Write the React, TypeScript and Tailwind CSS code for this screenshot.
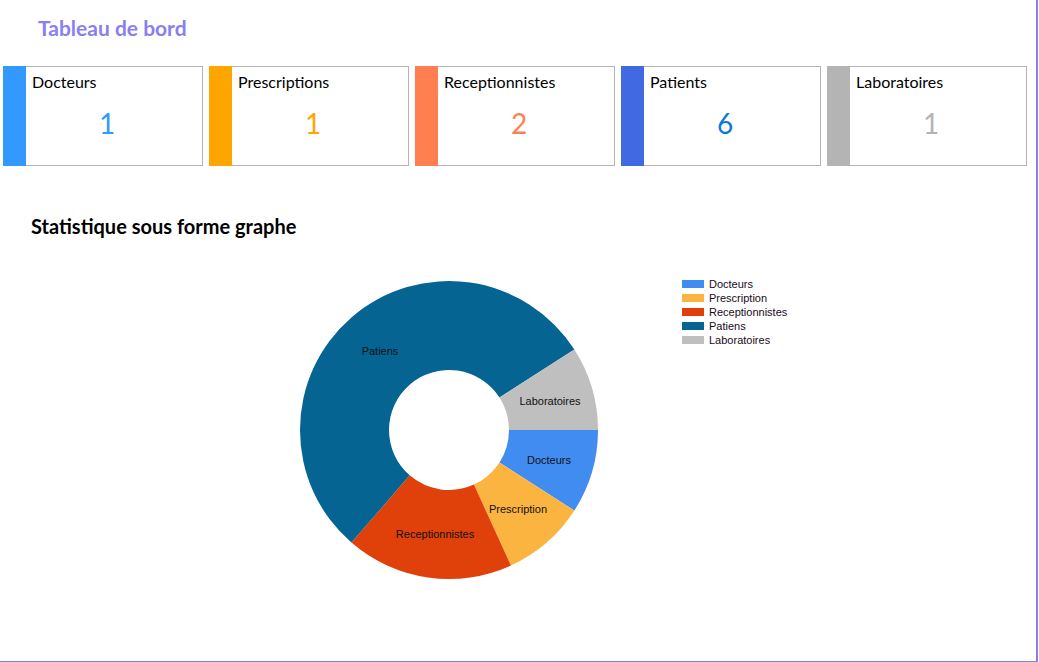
import React from 'react'

const cards = [
  { label: 'Docteurs', value: 1, bar: 'bg-[#3399ff]', text: 'text-[#3399ff]' },
  { label: 'Prescriptions', value: 1, bar: 'bg-[#ffa500]', text: 'text-[#ffa500]' },
  { label: 'Receptionnistes', value: 2, bar: 'bg-[#ff7f50]', text: 'text-[#ff7f50]' },
  { label: 'Patients', value: 6, bar: 'bg-[#4169e1]', text: 'text-[#0a78d8]' },
  { label: 'Laboratoires', value: 1, bar: 'bg-[#b4b4b4]', text: 'text-[#b4b4b4]' },
]

const slices = [
  { name: 'Docteurs', value: 1, color: '#418cf0', lx: 549, ly: 460 },
  { name: 'Prescription', value: 1, color: '#fcb441', lx: 518, ly: 509 },
  { name: 'Receptionnistes', value: 2, color: '#e0400a', lx: 435, ly: 534 },
  { name: 'Patiens', value: 6, color: '#056492', lx: 380, ly: 351 },
  { name: 'Laboratoires', value: 1, color: '#bfbfbf', lx: 550, ly: 401 },
]

const CX = 449
const CY = 170
const R = 149
const r = 60

function arc(a0: number, a1: number) {
  const p = (a: number, rad: number) => [CX + rad * Math.cos(a), CY + rad * Math.sin(a)]
  const [x0, y0] = p(a0, R)
  const [x1, y1] = p(a1, R)
  const [x2, y2] = p(a1, r)
  const [x3, y3] = p(a0, r)
  const large = a1 - a0 > Math.PI ? 1 : 0
  return `M${x0} ${y0} A${R} ${R} 0 ${large} 1 ${x1} ${y1} L${x2} ${y2} A${r} ${r} 0 ${large} 0 ${x3} ${y3} Z`
}

function Donut() {
  const total = slices.reduce((s, d) => s + d.value, 0)
  let acc = 0
  return (
    <svg width="1036" height="370" className="block mt-[22px]" style={{ fontFamily: '"Liberation Sans", Arial, sans-serif' }}>
      {slices.map(s => {
        const a0 = (acc / total) * Math.PI * 2
        acc += s.value
        const a1 = (acc / total) * Math.PI * 2
        return <path key={s.name} d={arc(a0, a1)} fill={s.color} />
      })}
      {slices.map(s => (
        <text key={s.name} x={s.lx} y={s.ly - 260 + 4} fontSize="11" textAnchor="middle" fill="#111">
          {s.name}
        </text>
      ))}
      {/* legend */}
      {slices.map((s, i) => (
        <g key={s.name}>
          <rect x="682" y={20 + i * 14} width="22" height="8" fill={s.color} />
          <text x="709" y={28 + i * 14} fontSize="11" fill="#1a0a1a">
            {s.name}
          </text>
        </g>
      ))}
    </svg>
  )
}

export default function App() {
  return (
    <div className="w-[1039px] h-[662px] bg-white" style={{ fontFamily: 'Lato, "Open Sans", sans-serif' }}>
      <div className="w-[1038px] h-[662px] border-r-2 border-b border-[#8080f0]">
        <h1 className="pl-[38px] pt-[16px] h-[66px] text-[21px] font-bold text-[#8a7ff0] leading-[24px]">
          Tableau de bord
        </h1>

        <div className="flex gap-[6px] pl-[3px]">
          {cards.map(c => (
            <div key={c.label} className="flex w-[200px] h-[100px]">
              <div className={`w-[23px] shrink-0 ${c.bar}`} />
              <div className="flex-1 flex flex-col border-y border-r border-[#b4b4b4]">
                <div className="pl-[6px] pt-[6px] text-[16px] leading-[18px] text-black">{c.label}</div>
                <div className={`text-center pr-[14px] pt-[15px] text-[28px] leading-[34px] ${c.text}`}>
                  {c.value}
                </div>
              </div>
            </div>
          ))}
        </div>

        <h2 className="pl-[31px] pt-[48px] text-[20px] font-bold leading-[24px] text-black">
          Statistique sous forme graphe
        </h2>

        <Donut />
      </div>
    </div>
  )
}
